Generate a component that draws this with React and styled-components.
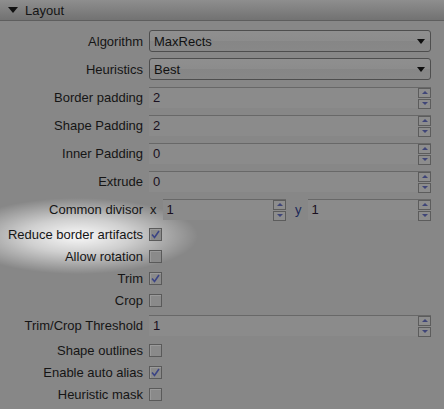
import styled, { createGlobalStyle } from "styled-components";

const GlobalStyle = createGlobalStyle`
  html, body {
    margin: 0;
    padding: 0;
    background: #878787;
  }
  body {
    font-family: "Liberation Sans", Arial, sans-serif;
  }
`;

const Panel = styled.div`
  width: 444px;
  height: 409px;
  background:
    radial-gradient(ellipse 120px 38px at 78px 236px, rgba(255,255,255,0.95) 0%, rgba(255,255,255,0.6) 45%, rgba(255,255,255,0) 100%),
    #878787;
  overflow: hidden;
`;

const Header = styled.div`
  height: 20px;
  display: flex;
  align-items: center;
  gap: 7px;
  padding-left: 8px;
  background: linear-gradient(#8e8e8e, #727272);
  border-bottom: 1px solid #5e5e5e;
  font-size: 13px;
  color: #141414;
`;

const Arrow = styled.span`
  width: 0;
  height: 0;
  border-left: 5px solid transparent;
  border-right: 5px solid transparent;
  border-top: 6px solid #111;
`;

const Form = styled.div`
  padding: 6px 13px 0 0;
  display: flex;
  flex-direction: column;
`;

const Row = styled.div`
  height: ${({ $h }) => $h}px;
  display: grid;
  grid-template-columns: 143px 1fr;
  column-gap: 6px;
  align-items: center;
`;

const Label = styled.div`
  text-align: right;
  font-size: 13px;
  color: #151515;
  white-space: nowrap;
`;

const Combo = styled.div`
  height: 20px;
  border: 1px solid #4e4e4e;
  border-radius: 3px;
  background: linear-gradient(#8f8f8f 0%, #8c8c8c 50%, #868686 50%, #888 100%);
  display: flex;
  align-items: center;
  justify-content: space-between;
  padding: 0 5px 0 4px;
  font-size: 13px;
  color: #111;
`;

const ComboArrow = styled.span`
  width: 0;
  height: 0;
  border-left: 4px solid transparent;
  border-right: 4px solid transparent;
  border-top: 5px solid #0e0e0e;
`;

const Spin = styled.div`
  height: 21px;
  flex: 1;
  border-top: 1px solid #686868;
  background: #8b8b8b;
  display: flex;
  align-items: center;
  justify-content: space-between;
  padding: 0 0 0 4px;
  font-size: 13px;
  color: #1a1020;
  box-sizing: border-box;
`;

const SpinButtons = styled.div`
  display: flex;
  flex-direction: column;
  gap: 1px;
  margin-top: 1px;
`;

const SpinBtn = styled.div`
  width: 11px;
  height: 8px;
  border: 1px solid #5c5c5c;
  background: #8d8d8d;
  display: flex;
  align-items: center;
  justify-content: center;

  &::after {
    content: "";
    width: 0;
    height: 0;
    border-left: 3px solid transparent;
    border-right: 3px solid transparent;
    ${({ $down }) =>
      $down ? "border-top: 3px solid #3f4578;" : "border-bottom: 3px solid #3f4578;"}
  }
`;

const Pair = styled.div`
  display: flex;
  align-items: center;
  gap: 6px;
`;

const Axis = styled.span`
  font-size: 13px;
  color: ${({ $y }) => ($y ? "#1c2a5a" : "#151515")};
  margin-left: ${({ $y }) => ($y ? "3px" : "1px")};
`;

const Box = styled.div`
  width: 11px;
  height: 11px;
  border: 1px solid #5a5a5a;
  background: #8a8a8a;
  box-shadow: inset 1px 1px 0 #9a9a9a;
  display: flex;
  align-items: center;
  justify-content: center;
`;

const Check = () => (
  <svg width="9" height="9" viewBox="0 0 9 9">
    <path d="M1 4.5 L3.5 7.5 L8 1" fill="none" stroke="#3b4485" strokeWidth="1.6" />
  </svg>
);

const SpinBox = ({ value }) => (
  <Spin>
    <span>{value}</span>
    <SpinButtons>
      <SpinBtn />
      <SpinBtn $down />
    </SpinButtons>
  </Spin>
);

const ComboBox = ({ value }) => (
  <Combo>
    <span>{value}</span>
    <ComboArrow />
  </Combo>
);

const CheckRow = ({ label, checked }) => (
  <Row $h={22}>
    <Label>{label}</Label>
    <div>
      <Box>{checked && <Check />}</Box>
    </div>
  </Row>
);

const FieldRow = ({ label, children }) => (
  <Row $h={28}>
    <Label>{label}</Label>
    <Pair>{children}</Pair>
  </Row>
);

export default function App() {
  return (
    <>
      <GlobalStyle />
      <Panel>
        <Header>
          <Arrow />
          <span>Layout</span>
        </Header>
        <Form>
          <Row $h={28}>
            <Label>Algorithm</Label>
            <ComboBox value="MaxRects" />
          </Row>
          <Row $h={28}>
            <Label>Heuristics</Label>
            <ComboBox value="Best" />
          </Row>
          <FieldRow label="Border padding"><SpinBox value="2" /></FieldRow>
          <FieldRow label="Shape Padding"><SpinBox value="2" /></FieldRow>
          <FieldRow label="Inner Padding"><SpinBox value="0" /></FieldRow>
          <FieldRow label="Extrude"><SpinBox value="0" /></FieldRow>
          <FieldRow label="Common divisor">
            <Axis>x</Axis>
            <SpinBox value="1" />
            <Axis $y>y</Axis>
            <SpinBox value="1" />
          </FieldRow>
          <CheckRow label="Reduce border artifacts" checked />
          <CheckRow label="Allow rotation" />
          <CheckRow label="Trim" checked />
          <CheckRow label="Crop" />
          <FieldRow label="Trim/Crop Threshold"><SpinBox value="1" /></FieldRow>
          <CheckRow label="Shape outlines" />
          <CheckRow label="Enable auto alias" checked />
          <CheckRow label="Heuristic mask" />
        </Form>
      </Panel>
    </>
  );
}
